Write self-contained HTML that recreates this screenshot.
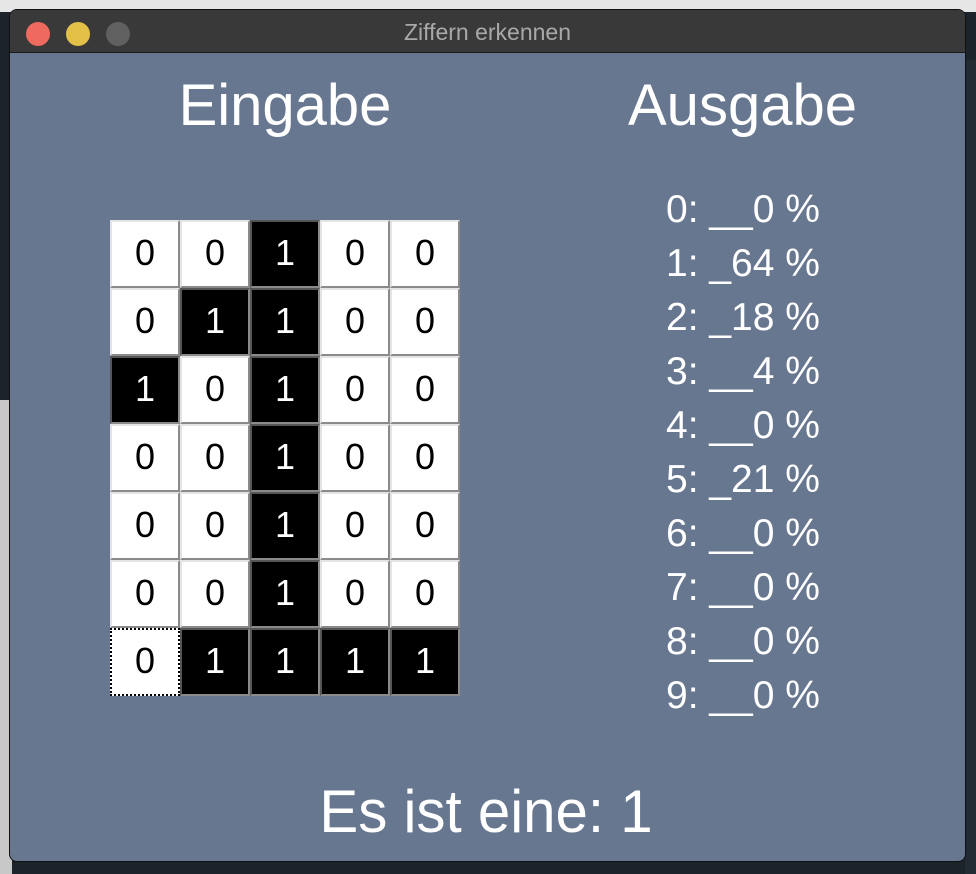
<!DOCTYPE html>
<html><head><meta charset="utf-8"><style>
*{margin:0;padding:0;box-sizing:border-box}
body{width:976px;height:874px;overflow:hidden;background:#1c232b;position:relative;font-family:"Liberation Sans",Arial,sans-serif}
.topstrip{position:absolute;left:0;top:0;width:976px;height:12px;background:#e6e6e6}
.leftstrip{position:absolute;left:0;top:400px;width:12px;height:474px;background:#c8c8c8}
.rightstrip{position:absolute;left:965px;top:60px;width:11px;height:814px;background:#222a33}
.win{position:absolute;left:10px;top:10px;width:955px;height:851px;border-radius:7px;overflow:hidden;background:#687790;box-shadow:0 0 0 1px #111}
.title{height:43px;background:#393939;border-bottom:1px solid #1a1a1a;position:relative;color:#a9a9a9;font-size:23px;text-align:center;line-height:44px}
.dot{position:absolute;top:12px;width:24px;height:24px;border-radius:50%}
.t{position:absolute;color:#fff;white-space:nowrap}
.h{font-size:58px;top:62px}
.grid{position:absolute;left:110px;top:220px}
.c{position:absolute;width:70px;height:68px;border-top:2px solid #e4e4e4;border-left:2px solid #e4e4e4;border-right:2px solid #8a8a8a;border-bottom:2px solid #8a8a8a;background:#fff;color:#000;font-size:36px;text-align:center;line-height:62px}
.c.b{background:#000;color:#fff;border-top-color:#555;border-left-color:#555}
.o{position:absolute;left:666px;font-size:39px;color:#fff}
</style></head><body>
<div class="topstrip"></div><div class="leftstrip"></div><div class="rightstrip"></div>
<div class="win">
<div class="title">Ziffern erkennen
<div class="dot" style="left:16px;background:#ee6a5e"></div>
<div class="dot" style="left:56px;background:#e3c048"></div>
<div class="dot" style="left:96px;background:#606060"></div>
</div>
<div class="t h" style="left:150px;width:250px;text-align:center">Eingabe</div>
<div class="t h" style="left:600px;width:265px;text-align:center">Ausgabe</div>
<div class="t" style="left:276px;width:400px;text-align:center;top:767px;font-size:60px;transform:scaleX(.97);transform-origin:center">Es ist eine: 1</div>
</div>
<div class="grid">
<div class="c" style="left:0;top:0">0</div><div class="c" style="left:70px;top:0">0</div><div class="c b" style="left:140px;top:0">1</div><div class="c" style="left:210px;top:0">0</div><div class="c" style="left:280px;top:0">0</div>
<div class="c" style="left:0;top:68px">0</div><div class="c b" style="left:70px;top:68px">1</div><div class="c b" style="left:140px;top:68px">1</div><div class="c" style="left:210px;top:68px">0</div><div class="c" style="left:280px;top:68px">0</div>
<div class="c b" style="left:0;top:136px">1</div><div class="c" style="left:70px;top:136px">0</div><div class="c b" style="left:140px;top:136px">1</div><div class="c" style="left:210px;top:136px">0</div><div class="c" style="left:280px;top:136px">0</div>
<div class="c" style="left:0;top:204px">0</div><div class="c" style="left:70px;top:204px">0</div><div class="c b" style="left:140px;top:204px">1</div><div class="c" style="left:210px;top:204px">0</div><div class="c" style="left:280px;top:204px">0</div>
<div class="c" style="left:0;top:272px">0</div><div class="c" style="left:70px;top:272px">0</div><div class="c b" style="left:140px;top:272px">1</div><div class="c" style="left:210px;top:272px">0</div><div class="c" style="left:280px;top:272px">0</div>
<div class="c" style="left:0;top:340px">0</div><div class="c" style="left:70px;top:340px">0</div><div class="c b" style="left:140px;top:340px">1</div><div class="c" style="left:210px;top:340px">0</div><div class="c" style="left:280px;top:340px">0</div>
<div class="c" style="left:0;top:408px;border:2px dotted #000">0</div><div class="c b" style="left:70px;top:408px">1</div><div class="c b" style="left:140px;top:408px">1</div><div class="c b" style="left:210px;top:408px">1</div><div class="c b" style="left:280px;top:408px">1</div>
</div>
<div class="o" style="top:188px">0: __0 %</div>
<div class="o" style="top:242px">1: _64 %</div>
<div class="o" style="top:296px">2: _18 %</div>
<div class="o" style="top:350px">3: __4 %</div>
<div class="o" style="top:404px">4: __0 %</div>
<div class="o" style="top:458px">5: _21 %</div>
<div class="o" style="top:512px">6: __0 %</div>
<div class="o" style="top:566px">7: __0 %</div>
<div class="o" style="top:620px">8: __0 %</div>
<div class="o" style="top:674px">9: __0 %</div>
</body></html>
